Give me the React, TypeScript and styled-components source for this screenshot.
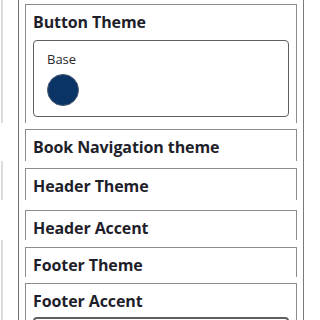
import React from "react";
import styled, { createGlobalStyle } from "styled-components";

const GlobalStyle = createGlobalStyle`
  html, body {
    margin: 0;
    padding: 0;
    background: #ffffff;
  }
  body {
    font-family: "Open Sans", "Liberation Sans", sans-serif;
  }
`;

const Page = styled.div`
  display: flex;
  width: 320px;
  height: 320px;
  overflow: hidden;
  background: #ffffff;
`;

const Rail = styled.div`
  display: flex;
  flex-direction: column;
  width: 18px;
  padding-left: 1px;
  box-sizing: border-box;
`;

const RailSegment = styled.div<{ $height: number; $on: boolean }>`
  flex: none;
  width: 2px;
  height: ${(p) => p.$height}px;
  background: ${(p) => (p.$on ? "#dcdcdc" : "transparent")};
`;

const Panel = styled.div`
  display: flex;
  flex-direction: column;
  width: 286px;
  box-sizing: border-box;
  padding: 4px 6px 0;
  border-left: 1px solid #6e6e6e;
  border-right: 1px solid #7a7a7a;
`;

const Card = styled.section<{ $gap: number; $bottom: number }>`
  flex: none;
  margin-top: ${(p) => p.$gap}px;
  padding: 7px 7px ${(p) => p.$bottom}px;
  border: 1px solid #8c8c8c;
  border-bottom: none;
`;

const Title = styled.h3`
  margin: 0;
  font-size: 16px;
  line-height: 20px;
  font-weight: 700;
  color: #1f1f2b;
  letter-spacing: -0.1px;
`;

const ColorBox = styled.div<{ $gap: number; $edge: number }>`
  margin-top: ${(p) => p.$gap}px;
  padding: 10px 13px 10px;
  border: ${(p) => p.$edge}px solid #5f5f5f;
  border-radius: 4px;
`;

const Label = styled.div`
  font-size: 13px;
  line-height: 16px;
  color: #2a2a2a;
`;

const Swatch = styled.div<{ $color: string }>`
  margin-top: 7px;
  width: 32px;
  height: 32px;
  box-sizing: border-box;
  border-radius: 50%;
  background: ${(p) => p.$color};
  border: 1px solid #4a5a70;
`;

type Section = {
  title: string;
  gap: number;
  bottom: number;
  box?: { gap: number; edge: number; swatch?: string };
};

const sections: Section[] = [
  { title: "Button Theme", gap: 0, bottom: 6, box: { gap: 8, edge: 1, swatch: "#0a3366" } },
  { title: "Book Navigation theme", gap: 6, bottom: 4 },
  { title: "Header Theme", gap: 7, bottom: 4 },
  { title: "Header Accent", gap: 10, bottom: 2 },
  { title: "Footer Theme", gap: 7, bottom: 2 },
  { title: "Footer Accent", gap: 6, bottom: 6, box: { gap: 6, edge: 2 } },
];

const rail = [
  { h: 123, on: true },
  { h: 38, on: false },
  { h: 39, on: true },
  { h: 40, on: false },
  { h: 80, on: true },
];

export default function App() {
  return (
    <>
      <GlobalStyle />
      <Page>
        <Rail>
          {rail.map((s, i) => (
            <RailSegment key={i} $height={s.h} $on={s.on} />
          ))}
        </Rail>
        <Panel>
          {sections.map((s) => (
            <Card key={s.title} $gap={s.gap} $bottom={s.bottom}>
              <Title>{s.title}</Title>
              {s.box && (
                <ColorBox $gap={s.box.gap} $edge={s.box.edge}>
                  {s.box.swatch && (
                    <>
                      <Label>Base</Label>
                      <Swatch $color={s.box.swatch} />
                    </>
                  )}
                </ColorBox>
              )}
            </Card>
          ))}
        </Panel>
      </Page>
    </>
  );
}
